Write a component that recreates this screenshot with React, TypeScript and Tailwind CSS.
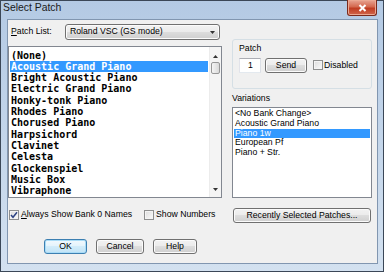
import React from "react";

const patches = [
  "(None)",
  "Acoustic Grand Piano",
  "Bright Acoustic Piano",
  "Electric Grand Piano",
  "Honky-tonk Piano",
  "Rhodes Piano",
  "Chorused Piano",
  "Harpsichord",
  "Clavinet",
  "Celesta",
  "Glockenspiel",
  "Music Box",
  "Vibraphone",
];

const variations = ["<No Bank Change>", "Acoustic Grand Piano", "Piano 1w", "European Pf", "Piano + Str."];

function Check({ checked }: { checked?: boolean }) {
  return (
    <span className="flex w-[10px] h-[10px] shrink-0 items-center justify-center border border-[#8e8f8f] bg-linear-to-br from-[#dcdcdc] to-[#fbfbfb] shadow-[inset_0_0_0_1px_#f4f4f4]">
      {checked && (
        <svg width="8" height="8" viewBox="0 0 8 8">
          <path d="M1 4 L3 6.3 L7 1.3" fill="none" stroke="#2d4383" strokeWidth="1.5" />
        </svg>
      )}
    </span>
  );
}

function Btn({ children, className = "", primary }: { children: React.ReactNode; className?: string; primary?: boolean }) {
  const skin = primary
    ? "border-[#3c7fb1] bg-[linear-gradient(#f2f9fd,#e3f3fc_50%,#d2ecfa_50%,#c1e3f6)] shadow-[inset_0_0_0_1px_#a9dcf7]"
    : "border-[#707070] bg-[linear-gradient(#f2f2f2,#ebebeb_50%,#dddddd_50%,#cfcfcf)] shadow-[inset_0_0_0_1px_#fbfbfb]";
  return (
    <div className={`flex h-[15px] items-center justify-center rounded-[3px] border ${skin} ${className}`}>{children}</div>
  );
}

function Arrow({ up }: { up?: boolean }) {
  return (
    <svg width="5" height="3" viewBox="0 0 5 3">
      <path d={up ? "M0 3 L2.5 0 L5 3 Z" : "M0 0 L5 0 L2.5 3 Z"} fill="#333" />
    </svg>
  );
}

export default function App() {
  return (
    <div className="flex h-[272px] w-[384px] flex-col border border-[#3b4757] bg-linear-to-b from-[#b4cae4] to-[#d3e1f0] font-['Liberation_Sans',Arial,sans-serif] text-[8.7px] text-black">
      {/* title bar */}
      <div className="relative flex h-[18px] shrink-0 items-start pl-[2px]">
        <span className="text-[10.4px] leading-[13px] text-[#1b1b1b]">Select Patch</span>
        <div className="absolute right-[6px] top-[-1px] flex h-[16px] w-[30px] items-center justify-center rounded-b-[3px] border border-t-0 border-[#7a2a1c] bg-[linear-gradient(#e8a593,#d4694f_45%,#c03d22_55%,#d0664c)] shadow-[inset_0_0_0_1px_#eba892]">
          <svg width="9" height="8" viewBox="0 0 9 8">
            <path d="M1.5 1 L7.5 7 M7.5 1 L1.5 7" stroke="#fff" strokeWidth="2" />
          </svg>
        </div>
      </div>

      {/* client */}
      <div className="mb-[7px] ml-[6px] mr-[5px] flex flex-1 border border-[#8196b0] bg-[#f0f0f0]">
        {/* left column */}
        <div className="flex w-[214px] flex-col">
          <div className="mt-[4px] flex h-[16px] items-center">
            <span className="w-[57px] pl-[3px]">
              <span className="underline">P</span>atch List:
            </span>
            <div className="flex h-[16px] w-[155px] items-center justify-between rounded-[3px] border border-[#707070] bg-[linear-gradient(#f2f2f2,#ebebeb_50%,#dddddd_50%,#cfcfcf)] pl-[4px] pr-[4px] shadow-[inset_0_0_0_1px_#fbfbfb]">
              <span>Roland VSC (GS mode)</span>
              <Arrow />
            </div>
          </div>

          <div className="mt-[6px] flex h-[152px] border border-[#828790] bg-white">
            <div className="flex-1 px-[1px] pt-[2.5px] font-['DejaVu_Sans_Mono',monospace] text-[10px] font-bold">
              {patches.map((p) => (
                <div
                  key={p}
                  className={`h-[11.33px] whitespace-nowrap pl-[1px] leading-[11.33px] ${
                    p === "Acoustic Grand Piano" ? "bg-[#3399ff] text-white" : ""
                  }`}
                >
                  {p}
                </div>
              ))}
            </div>
            <div className="flex w-[12px] flex-col border-l border-[#ececec] bg-[#f4f4f4]">
              <div className="flex h-[15px] items-end justify-center pb-[4px]">
                <Arrow up />
              </div>
              <div className="mx-[1px] h-[12px] rounded-[2px] border border-[#979797] bg-linear-to-r from-[#f5f5f5] to-[#d9d9d9]" />
              <div className="flex-1" />
              <div className="flex h-[15px] items-start justify-center pt-[6px]">
                <Arrow />
              </div>
            </div>
          </div>

          <div className="mt-[11px] flex h-[12px] items-center">
            <div className="flex w-[136px] items-center gap-[2px] pl-[1px]">
              <Check checked />
              <span>
                <span className="underline">A</span>lways Show Bank 0 Names
              </span>
            </div>
            <div className="flex items-center gap-[2px]">
              <Check />
              <span>Show Numbers</span>
            </div>
          </div>

          <div className="mt-[18px] flex gap-[9px] pl-[36px]">
            <Btn primary className="w-[43px]">OK</Btn>
            <Btn className="w-[48px]">Cancel</Btn>
            <Btn className="w-[44px]">Help</Btn>
          </div>
        </div>

        {/* right column */}
        <div className="ml-[10px] flex w-[140px] flex-col">
          <div className="mt-[19px] h-[50px] rounded-[3px] border border-[#d5dfe5] px-[6px] pt-[3px]">
            <div className="h-[10px] leading-[10px]">Patch</div>
            <div className="mt-[5px] flex h-[15px] items-center">
              <div className="flex h-[15px] w-[22px] items-center border border-[#abadb3] border-b-[#e3e9ef] border-r-[#dbdfe6] border-l-[#e2e3ea] bg-white pl-[8px]">
                1
              </div>
              <Btn className="ml-[4px] w-[42px]">Send</Btn>
              <div className="ml-[6px] flex items-center gap-[1px]">
                <Check />
                <span>Disabled</span>
              </div>
            </div>
          </div>

          <div className="mt-[4px] h-[10px] leading-[10px]">Variations</div>
          <div className="mt-[4px] h-[91px] border border-[#828790] bg-white px-[1px] pt-[1px]">
            {variations.map((v) => (
              <div
                key={v}
                className={`h-[9.8px] whitespace-nowrap pl-[1px] leading-[9.8px] ${
                  v === "Piano 1w" ? "bg-[#3399ff] text-white" : ""
                }`}
              >
                {v}
              </div>
            ))}
          </div>

          <Btn className="ml-[1px] mt-[10px] w-[138px]">Recently Selected Patches...</Btn>
        </div>
      </div>
    </div>
  );
}
